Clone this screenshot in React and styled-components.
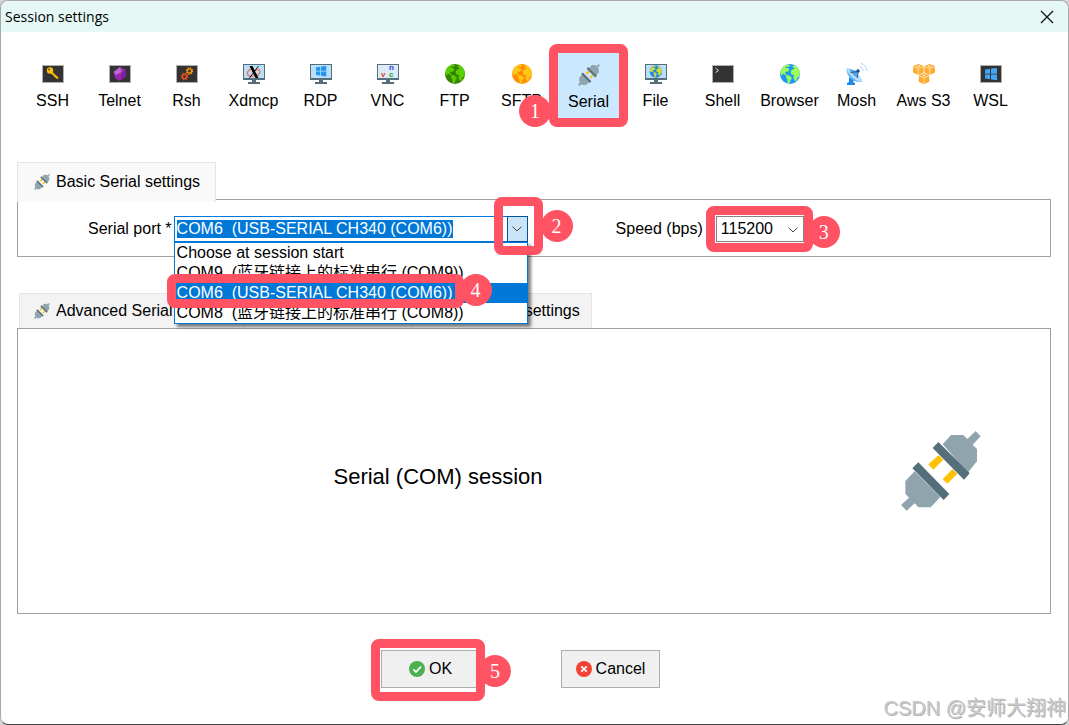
import React, { useEffect, useRef, useState } from 'react';
import styled, { createGlobalStyle } from 'styled-components';

const GlobalStyle = createGlobalStyle`
  * {
    box-sizing: border-box;
  }
  body {
    margin: 0;
    background: #d5d5d5;
    font-family: "Liberation Sans", "Noto Sans CJK SC", Arial, sans-serif;
    font-size: 16px;
    line-height: 18px;
    color: #000;
  }
  button,
  input,
  select {
    font: inherit;
    color: inherit;
    margin: 0;
  }
`;

/* ---------- icons ---------- */

const Svg = ({ size = 22, box = 22, children }) => (
  <svg width={size} height={size} viewBox={`0 0 ${box} ${box}`} aria-hidden="true">
    {children}
  </svg>
);

const PlugIcon = ({ size = 22 }) => (
  <Svg size={size} box={240}>
    <path fill="#90a4ae" d="M125 40L150 12H187L199 24L224 0L239 16L215 41L228 54V91L200 125Z" />
    <path fill="#90a4ae" d="M41 121L13 150V188L24 200L0 222L17 239L41 217L52 229H89L118 198Z" />
    <path fill="#ffc107" d="M113 72L127 86L97 116L82 100ZM155 114L169 128L139 158L125 144Z" />
    <path fill="#546e7a" d="M112 33L206 127L189 146L95 51ZM52 94L145 189L128 207L34 112Z" />
  </Svg>
);

const Terminal = ({ children }) => (
  <Svg>
    <rect x="0.5" y="2.5" width="21" height="17" fill="#333" stroke="#b0b0b0" />
    {children}
  </Svg>
);

const Monitor = ({ screen = '#bbdefb', children }) => (
  <Svg>
    <path fill="#546e7a" d="M0 1H22V17H0ZM9 17H13V19H17V21H5V19H9Z" />
    <path fill={screen} d="M1 2H21V15H1Z" />
    {children}
  </Svg>
);

const GlobeShape = ({ sea, land }) => (
  <g>
    <circle cx="11" cy="11" r="10" fill={sea} />
    <path
      fill={land}
      d="M2 7Q4 3 8 1.600L11 2L10 4L8 3.500L6 5L9 5L10.500 7L8 9L6.500 8.500L6 10L8 11.500L6.500 12L4 10.500L3 12.500L1.300 11Z"
    />
    <path fill={land} d="M7.500 12L10.500 12.500L13 15L11.500 17L10.500 20.500L8.500 20L8.500 16.500L7 14.500Z" />
    <path
      fill={land}
      d="M13 3L16 2.500Q20 5 20.800 9L20.500 13L18.500 14.500L17.500 17.500L16 18L14.500 15L15 12L12.500 11.500L11.500 9L13 6.500L15.500 6L15 5Z"
    />
  </g>
);

const Globe = (props) => (
  <Svg>
    <GlobeShape {...props} />
  </Svg>
);

const winLogo = 'M0 1.500L5 0.800V5.700H0ZM6 0.600L12 0V5.700H6ZM0 6.600H5V11.300L0 10.600ZM6 6.600H12V12.300L6 11.500Z';

const gear = (cx, cy, color) => (
  <g stroke={color} fill="none">
    <circle cx={cx} cy={cy} r="2.100" strokeWidth="1.300" />
    <circle cx={cx} cy={cy} r="3.200" strokeWidth="1.200" strokeDasharray="1.300 1.213" />
  </g>
);

const cube = (x, y) => (
  <g transform={`translate(${x} ${y})`}>
    <path fill="#ffab2e" d="M5.300 0L10.600 2V8.500L5.300 11L0 8.500V2Z" />
    <path stroke="#fff3dd" strokeWidth="0.700" fill="none" d="M0 2.500L5.300 4.800L10.600 2.500M5.300 4.800V11M3.500 1.800L7 3M7 1.800L3.500 3" />
  </g>
);

const icons = {
  SSH: (
    <Terminal>
      <path d="M9 9L16 15.500M12.500 14L14 12.500" stroke="#ffb300" strokeWidth="2.200" />
      <circle cx="8" cy="7.500" r="3.200" fill="#ffc107" />
      <circle cx="7" cy="6.500" r="0.900" fill="#4d4020" />
    </Terminal>
  ),
  Telnet: (
    <Terminal>
      <path fill="#9c27b0" d="M11 4L17 7L16.500 13.500L11 18L6 15L4.500 9Z" />
      <path fill="#ba68c8" d="M11 4L13 9L7 12L4.500 9Z" />
      <path fill="#7b1fa2" d="M13 9L17 7L16.500 13.500L11 18Z" />
    </Terminal>
  ),
  Rsh: (
    <Terminal>
      {gear(13.5, 8, '#ff9800')}
      {gear(8.5, 13.5, '#f4511e')}
    </Terminal>
  ),
  Xdmcp: (
    <Monitor>
      <path d="M10 5.500C6 6 4 8.500 4.500 11C5 13.500 9 14 12 12.500M9.500 9.500C12 6 17 5.500 17 8.500C17 11 15 12.500 12.500 13" stroke="#ff7043" strokeWidth="1.300" fill="none" />
      <path d="M6.500 3H9.500L15.500 15H12.500Z" fill="#000" />
      <path d="M15.500 3L6.500 15" stroke="#000" strokeWidth="0.900" />
    </Monitor>
  ),
  RDP: (
    <Monitor>
      <path transform="translate(6 3) scale(0.85)" fill="#2196f3" d={winLogo} />
    </Monitor>
  ),
  VNC: (
    <Monitor screen="#dcebfa">
      <g fontFamily="Liberation Sans" fontSize="8" fontWeight="bold">
        <text x="4" y="14" fill="#e53935">v</text>
        <text x="12" y="7" fill="#3535e0">n</text>
        <text x="12" y="14" fill="#1f9e2c">c</text>
      </g>
    </Monitor>
  ),
  FTP: <Globe sea="#378000" land="#58cf00" />,
  SFTP: <Globe sea="#ff8f00" land="#ffc61a" />,
  Serial: <PlugIcon />,
  File: (
    <Monitor>
      <g transform="translate(4 1.700) scale(0.62)">
        <GlobeShape sea="#1e88e5" land="#cddc39" />
      </g>
    </Monitor>
  ),
  Shell: (
    <Terminal>
      <path d="M3.500 5L6.500 7.500L3.500 9.500" fill="none" stroke="#ddd" />
    </Terminal>
  ),
  Browser: <Globe sea="#2196f3" land="#9cff57" />,
  Mosh: (
    <Svg>
      <path fill="#1e88e5" d="M3 14L8 17L7 19L9 20V22H1V20L3 19Z" />
      <path fill="#64b5f6" d="M1 5C-0.500 12 6 20 15.500 19L16 17Z" />
      <ellipse cx="8.500" cy="12" rx="9.500" ry="3" transform="rotate(42 8.500 12)" fill="#bbdefb" />
      <path fill="#42a5f5" d="M3 6L11 8L12 15C8 13 4.500 9.500 3 6Z" />
      <path d="M4.500 9.500L12 8.500L11.500 15" stroke="#455a64" fill="none" />
      <circle cx="12" cy="8" r="1.700" fill="#0d47a1" />
      <path d="M14 3.500Q16.500 4.500 17 7.500M15 0.500Q20 2.500 21 7.500" stroke="#90caf9" strokeDasharray="2.500 1" fill="none" />
    </Svg>
  ),
  'Aws S3': (
    <Svg>
      {cube(0, 1)}
      {cube(11.4, 1)}
      {cube(5.7, 10.2)}
    </Svg>
  ),
  WSL: (
    <Terminal>
      <path transform="translate(5 5)" fill="#42a5f5" d={winLogo} />
    </Terminal>
  ),
};

const Chevron = () => (
  <svg width="10" height="6" viewBox="0 0 10 6" aria-hidden="true">
    <path d="M0.500 0.500L5 5L9.500 0.500" fill="none" stroke="#444" />
  </svg>
);

const OkIcon = () => (
  <Svg size={16} box={16}>
    <circle cx="8" cy="8" r="8" fill="#4caf50" />
    <path d="M4.300 8.300L7 11L12 5.500" fill="none" stroke="#fff" strokeWidth="1.700" />
  </Svg>
);

const CancelIcon = () => (
  <Svg size={16} box={16}>
    <circle cx="8" cy="8" r="8" fill="#f44336" />
    <path d="M5.300 5.300L10.700 10.700M10.700 5.300L5.300 10.700" stroke="#fff" strokeWidth="1.800" />
  </Svg>
);

/* ---------- layout ---------- */

const Dialog = styled.div`
  position: relative;
  display: flex;
  flex-direction: column;
  min-height: 100vh;
  background: #fff;
  border: 1px solid #a8a8a8;
  border-bottom-color: #444;
  border-radius: 8px;
`;

const TitleBar = styled.header`
  display: flex;
  align-items: center;
  justify-content: space-between;
  height: 31px;
  padding: 0 14px 0 4px;
  background: #e5f8f6;
  border-radius: 8px 8px 0 0;
`;

const Title = styled.h1`
  margin: 0;
  font-family: "Open Sans", "Noto Sans", sans-serif;
  font-size: 14px;
  font-weight: 400;
`;

const CloseButton = styled.button`
  display: flex;
  padding: 0;
  border: none;
  background: none;
`;

const Toolbar = styled.nav`
  display: flex;
  gap: 6px;
  padding: 21px 21px 44px;
`;

const Tool = styled.button`
  position: relative;
  display: flex;
  flex-direction: column;
  align-items: center;
  gap: 7px;
  width: 61px;
  height: 65px;
  padding: ${(props) => (props.$active ? '11px 0 0' : '10px 0 0')};
  border: none;
  background: ${(props) => (props.$active ? '#cce8ff' : 'none')};
  white-space: nowrap;
`;

const Main = styled.main`
  flex: 1;
  display: flex;
  flex-direction: column;
  padding: 0 17px 0 16px;
`;

const TabRow = styled.div`
  display: flex;
  position: relative;
  padding-left: ${(props) => (props.$inset ? '2px' : '0')};
  margin-bottom: ${(props) => (props.$inset ? '0' : '-3px')};
`;

const Tab = styled.button`
  display: flex;
  align-items: center;
  gap: 6px;
  height: ${(props) => (props.$active ? '40px' : '35px')};
  padding: ${(props) => (props.$active ? '0 15px 2px 16px' : '0 11px 0 14px')};
  border: 1px solid #e4e4e4;
  border-bottom: none;
  background: ${(props) => (props.$active ? '#f9f9f9' : '#f3f3f3')};
  white-space: nowrap;

  & + & {
    border-left: none;
  }
`;

const Panel = styled.section`
  border: 1px solid #a0a0a0;
`;

const FieldPanel = styled(Panel)`
  display: flex;
  align-items: center;
  padding: 16px 0 14px 70px;
  margin-bottom: 36px;
`;

const SessionPanel = styled(Panel)`
  flex: 1;
  display: flex;
  align-items: center;
`;

const SessionTitle = styled.h2`
  flex: 1;
  margin: 0;
  padding-top: 12px;
  font-size: 22px;
  line-height: 26px;
  font-weight: 400;
  text-align: center;
`;

const SessionIcon = styled.div`
  display: flex;
  padding: 0 69px 0 43px;
`;

const Label = styled.label`
  margin-right: ${(props) => props.$gap};
  white-space: nowrap;
`;

const ComboBox = styled.div`
  position: relative;
  z-index: 2;
  display: flex;
  width: 354px;
  height: 26px;
  margin-right: 88px;
  border: 1px solid #0078d7;
  background: #fff;
`;

const ComboInput = styled.input`
  flex: 1;
  min-width: 0;
  padding: 0 2px;
  border: none;
  outline: none;
  background: none;

  &::selection {
    background: #0078d7;
    color: #fff;
  }
`;

const ComboButton = styled.button`
  display: flex;
  align-items: center;
  justify-content: center;
  width: 21px;
  margin: -1px;
  padding: 0;
  border: 1px solid #005499;
  background: #cce4f7;
`;

const OptionList = styled.ul`
  position: absolute;
  top: 25px;
  left: -1px;
  right: -1px;
  margin: 0;
  padding: 0;
  list-style: none;
  border: 1px solid #0078d7;
  background: #fff;
  box-shadow: 3px 3px 3px rgba(0, 0, 0, 0.5);
`;

const Option = styled.li`
  position: relative;
  z-index: ${(props) => (props.$selected ? 1 : 0)};
  height: 20px;
  padding: 0 2px;
  line-height: 20px;
  white-space: pre;
  background: ${(props) => (props.$selected ? '#0078d7' : '#fff')};
  color: ${(props) => (props.$selected ? '#fff' : '#000')};
`;

const SelectBox = styled.div`
  position: relative;
  display: flex;

  > svg {
    position: absolute;
    top: 11px;
    right: 6px;
    pointer-events: none;
  }
`;

const Select = styled.select`
  appearance: none;
  width: 88px;
  height: 26px;
  padding: 0 4px;
  border: 1px solid #858585;
  border-radius: 0;
  background: #fff;
`;

const Footer = styled.footer`
  display: flex;
  justify-content: center;
  gap: 81px;
  padding: 36px 28px 36px 0;
`;

const ActionButton = styled.button`
  position: relative;
  display: flex;
  align-items: center;
  justify-content: center;
  gap: 4px;
  width: 99px;
  height: 38px;
  padding: 0;
  border: 1px solid #adadad;
  background: #f0f0f0;
`;

const Watermark = styled.div`
  position: absolute;
  right: 2px;
  bottom: 2px;
  font-family: "Liberation Sans", "Noto Sans CJK SC", sans-serif;
  font-size: 20px;
  line-height: 28px;
  color: #c8c8c8;
  text-shadow: 1px 1px 0 #b4b4b4;
  pointer-events: none;
`;

/* ---------- step markers ---------- */

const Frame = styled.span`
  position: absolute;
  z-index: 3;
  top: ${(props) => props.$top}px;
  right: ${(props) => props.$right}px;
  bottom: ${(props) => props.$bottom}px;
  left: ${(props) => props.$left}px;
  border: 9px solid #ff5263;
  border-radius: 8px;
  pointer-events: none;
`;

const Badge = styled.span`
  position: absolute;
  left: ${(props) => props.$x}px;
  top: ${(props) => props.$y}px;
  width: 32px;
  height: 32px;
  border-radius: 50%;
  background: #ff5263;
  color: #fff;
  font-family: "Liberation Serif", serif;
  font-size: 20px;
  line-height: 32px;
  text-align: center;
`;

const Step = ({ number, inset, badge }) => {
  const [top, right, bottom, left] = inset;
  return (
    <Frame $top={top} $right={right} $bottom={bottom} $left={left}>
      <Badge $x={badge[0]} $y={badge[1]}>{number}</Badge>
    </Frame>
  );
};

const ports = [
  'Choose at session start',
  'COM9  (蓝牙链接上的标准串行 (COM9))',
  'COM6  (USB-SERIAL CH340 (COM6))',
  'COM8  (蓝牙链接上的标准串行 (COM8))',
];

const App = () => {
  const [session, setSession] = useState('Serial');
  const [port, setPort] = useState(ports[2]);
  const [open, setOpen] = useState(true);
  const portRef = useRef(null);

  // picking a port highlights its name in the field
  const pickPort = (item) => {
    setPort(item);
    setOpen(false);
  };

  useEffect(() => {
    portRef.current.focus();
    portRef.current.select();
  }, [open]);

  return (
    <>
      <GlobalStyle />
      <Dialog role="dialog" aria-labelledby="dialog-title">
        <TitleBar>
          <Title id="dialog-title">Session settings</Title>
          <CloseButton type="button" aria-label="Close">
            <svg width="14" height="14" viewBox="0 0 14 14" aria-hidden="true">
              <path d="M1 1L13 13M13 1L1 13" stroke="#111" strokeWidth="1.300" />
            </svg>
          </CloseButton>
        </TitleBar>

        <Toolbar>
          {Object.keys(icons).map((name) => (
            <Tool key={name} type="button" $active={name === session} onClick={() => setSession(name)}>
              {icons[name]}
              <span>{name}</span>
              {name === 'Serial' && <Step number={1} inset={[-9, -9, -9, -9]} badge={[-39, 42]} />}
            </Tool>
          ))}
        </Toolbar>

        <Main>
          <TabRow>
            <Tab type="button" $active>
              <PlugIcon size={16} />
              Basic Serial settings
            </Tab>
          </TabRow>
          <FieldPanel>
            <Label htmlFor="port" $gap="2px">Serial port *</Label>
            <ComboBox>
              <ComboInput
                id="port"
                ref={portRef}
                role="combobox"
                aria-expanded={open}
                aria-controls="port-list"
                value={port}
                onChange={(e) => setPort(e.target.value)}
              />
              <ComboButton type="button" aria-label="Show ports" onClick={() => setOpen(!open)}>
                <Chevron />
              </ComboButton>
              {open && (
                <OptionList id="port-list" role="listbox">
                  {ports.map((item) => (
                    <Option
                      key={item}
                      role="option"
                      aria-selected={item === port}
                      $selected={item === port}
                      onClick={() => pickPort(item)}
                    >
                      {item}
                      {item === ports[2] && <Step number={4} inset={[-9, 63, -5, -8]} badge={[284, -9]} />}
                    </Option>
                  ))}
                </OptionList>
              )}
              <Step number={2} inset={[-20, -16, -14, 319]} badge={[38, 4]} />
            </ComboBox>

            <Label htmlFor="speed" $gap="13px">Speed (bps)</Label>
            <SelectBox>
              <Select id="speed" defaultValue="115200">
                <option>9600</option>
                <option>57600</option>
                <option>115200</option>
              </Select>
              <Chevron />
              <Step number={3} inset={[-10, -9, -10, -10]} badge={[93, 1]} />
            </SelectBox>
          </FieldPanel>

          <TabRow $inset>
            <Tab type="button">
              <PlugIcon size={16} />
              Advanced Serial settings
            </Tab>
            <Tab type="button">
              <PlugIcon size={16} />
              Terminal settings
            </Tab>
            <Tab type="button">
              <PlugIcon size={16} />
              Bookmark settings
            </Tab>
          </TabRow>
          <SessionPanel>
            <SessionTitle>Serial (COM) session</SessionTitle>
            <SessionIcon>
              <PlugIcon size={80} />
            </SessionIcon>
          </SessionPanel>
        </Main>

        <Footer>
          <ActionButton type="button">
            <OkIcon />
            OK
            <Step number={5} inset={[-12, -6, -14, -11]} badge={[99, 7]} />
          </ActionButton>
          <ActionButton type="button">
            <CancelIcon />
            Cancel
          </ActionButton>
        </Footer>
        <Watermark>CSDN @安师大翔神</Watermark>
      </Dialog>
    </>
  );
};

export default App;
